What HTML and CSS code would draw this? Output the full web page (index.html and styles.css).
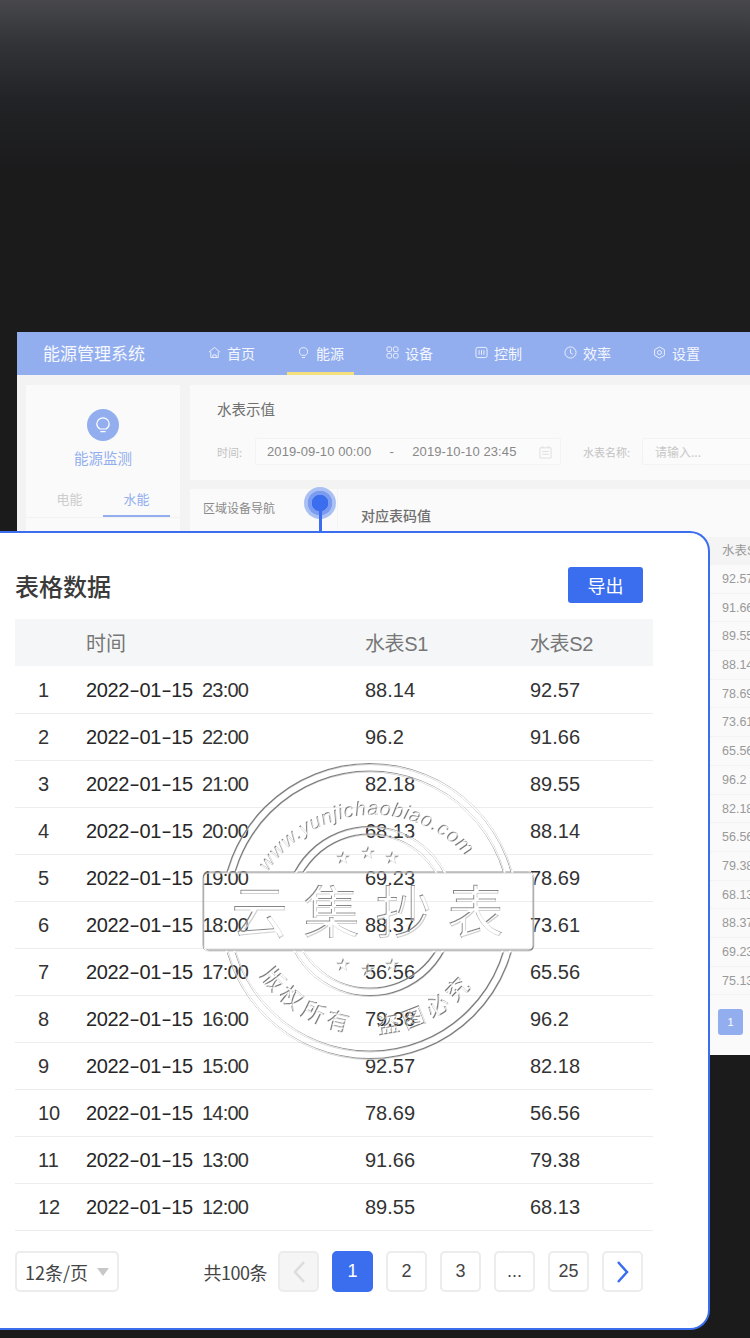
FILE: index.html
```html
<!DOCTYPE html>
<html lang="zh">
<head>
<meta charset="utf-8">
<title>能源管理系统</title>
<link rel="stylesheet" href="styles.css">
</head>
<body>
<div class="stage">
  <section class="dash">
    <header class="topbar">
      <div class="logo">能源管理系统</div>
      <nav class="nav">
        <a class="nav-item"><svg class="nav-ico" viewBox="0 0 14 14"><path d="M1 6.600 7 1.600l6 5M3 6v6.400h8V6M5.200 12.200V9.600h3.600v2.600"/></svg>首页</a>
        <a class="nav-item active"><svg class="nav-ico" viewBox="0 0 14 14"><path d="M4.800 10C3.400 9 2.600 7.800 2.600 6.200a4.400 4.400 0 0 1 8.800 0c0 1.600-.8 2.800-2.200 3.800zM5.200 12.400h3.600"/></svg>能源</a>
        <a class="nav-item"><svg class="nav-ico" viewBox="0 0 14 14"><rect x="1" y="1" width="5" height="5" rx="1.500"/><rect x="8" y="1" width="5" height="5" rx="1.500"/><rect x="1" y="8" width="5" height="5" rx="1.500"/><rect x="8" y="8" width="5" height="5" rx="1.500"/></svg>设备</a>
        <a class="nav-item"><svg class="nav-ico" viewBox="0 0 14 14"><rect x="1" y="1.500" width="12" height="11" rx="2"/><path d="M4.400 4.500v5M7 4.500v5M9.600 4.500v5"/></svg>控制</a>
        <a class="nav-item"><svg class="nav-ico" viewBox="0 0 14 14"><circle cx="7" cy="7" r="6"/><path d="M7 3.500V7.500l2.400 1.200"/></svg>效率</a>
        <a class="nav-item"><svg class="nav-ico" viewBox="0 0 14 14"><path d="M7 .9 12.300 4v6L7 13.100 1.700 10V4z"/><circle cx="7" cy="7" r="2.200"/></svg>设置</a>
      </nav>
    </header>
    <div class="body">
      <aside class="side">
        <div class="side-head">
          <span class="side-badge"><svg viewBox="0 0 20 20"><path d="M6.800 14C4.900 12.700 3.800 11 3.800 9a6.200 6.200 0 0 1 12.400 0c0 2-1.100 3.700-3 5zM7.400 16.600h5.200"/></svg></span>
          <div class="side-title">能源监测</div>
        </div>
        <div class="tabs"><span class="tab">电能</span><span class="tab on">水能</span></div>
      </aside>
      <div class="main">
        <section class="filter">
          <h2 class="panel-title">水表示值</h2>
          <div class="filter-row">
            <span class="lbl">时间:</span>
            <div class="range"><span>2019-09-10 00:00</span><span class="dash-sep">-</span><span>2019-10-10 23:45</span>
              <svg class="cal" viewBox="0 0 14 14"><path d="M1 2.500h12v11H1zM4 .5v2M10 .5v2M3.500 6.500h7M3.500 9.500h7"/></svg></div>
            <span class="lbl lbl-name">水表名称:</span>
            <div class="inp">请输入...</div>
          </div>
        </section>
        <div class="lower">
          <section class="tree"><h3 class="tree-title">区域设备导航</h3></section>
          <section class="values">
            <h2 class="values-title">对应表码值</h2>
            <div class="mini">
              <div class="mini-row mini-head">水表S2</div>
              <div class="mini-row">92.57</div><div class="mini-row">91.66</div><div class="mini-row">89.55</div>
              <div class="mini-row">88.14</div><div class="mini-row">78.69</div><div class="mini-row">73.61</div>
              <div class="mini-row">65.56</div><div class="mini-row">96.2</div><div class="mini-row">82.18</div>
              <div class="mini-row">56.56</div><div class="mini-row">79.38</div><div class="mini-row">68.13</div>
              <div class="mini-row">88.37</div><div class="mini-row">69.23</div><div class="mini-row">75.13</div>
            </div>
            <div class="mini-pager"><span class="mini-page">1</span></div>
          </section>
        </div>
      </div>
    </div>
  </section>

  <div class="marker"><span class="halo"></span><span class="stem"></span></div>

  <section class="card">
    <div class="card-head">
      <h1 class="card-title">表格数据</h1>
      <button class="export">导出</button>
    </div>
    <div class="tbl">
      <div class="row head"><span></span><span>时间</span><span>水表S1</span><span>水表S2</span></div>
      <div class="row"><span>1</span><span><i class="d">2022<b>-</b>01<b>-</b>15</i>23:00</span><span>88.14</span><span>92.57</span></div>
      <div class="row"><span>2</span><span><i class="d">2022<b>-</b>01<b>-</b>15</i>22:00</span><span>96.2</span><span>91.66</span></div>
      <div class="row"><span>3</span><span><i class="d">2022<b>-</b>01<b>-</b>15</i>21:00</span><span>82.18</span><span>89.55</span></div>
      <div class="row"><span>4</span><span><i class="d">2022<b>-</b>01<b>-</b>15</i>20:00</span><span>68.13</span><span>88.14</span></div>
      <div class="row"><span>5</span><span><i class="d">2022<b>-</b>01<b>-</b>15</i>19:00</span><span>69.23</span><span>78.69</span></div>
      <div class="row"><span>6</span><span><i class="d">2022<b>-</b>01<b>-</b>15</i>18:00</span><span>88.37</span><span>73.61</span></div>
      <div class="row"><span>7</span><span><i class="d">2022<b>-</b>01<b>-</b>15</i>17:00</span><span>56.56</span><span>65.56</span></div>
      <div class="row"><span>8</span><span><i class="d">2022<b>-</b>01<b>-</b>15</i>16:00</span><span>79.38</span><span>96.2</span></div>
      <div class="row"><span>9</span><span><i class="d">2022<b>-</b>01<b>-</b>15</i>15:00</span><span>92.57</span><span>82.18</span></div>
      <div class="row"><span>10</span><span><i class="d">2022<b>-</b>01<b>-</b>15</i>14:00</span><span>78.69</span><span>56.56</span></div>
      <div class="row"><span>11</span><span><i class="d">2022<b>-</b>01<b>-</b>15</i>13:00</span><span>91.66</span><span>79.38</span></div>
      <div class="row"><span>12</span><span><i class="d">2022<b>-</b>01<b>-</b>15</i>12:00</span><span>89.55</span><span>68.13</span></div>
    </div>
    <div class="pager">
      <div class="size">12条/页<span class="caret"></span></div>
      <div class="pages">
        <span class="total">共100条</span>
        <span class="pg disabled"><svg class="chev" viewBox="0 0 14 24"><path d="M12 2 3 12l9 10"/></svg></span>
        <span class="pg cur">1</span>
        <span class="pg">2</span>
        <span class="pg">3</span>
        <span class="pg">...</span>
        <span class="pg">25</span>
        <span class="pg next"><svg class="chev" viewBox="0 0 14 24"><path d="M2 2l9 10-9 10"/></svg></span>
      </div>
    </div>
  </section>

  <svg class="stamp" viewBox="200 750 350 320" aria-label="云集抄表 watermark">
    <defs>
      <filter id="emboss" x="-5%" y="-5%" width="110%" height="110%">
        <feOffset in="SourceAlpha" dx="0.7" dy="0.7" result="o1"/>
        <feComposite in="SourceAlpha" in2="o1" operator="out" result="edgeA"/>
        <feFlood flood-color="#555" flood-opacity=".8"/>
        <feComposite in2="edgeA" operator="in" result="dark"/>
        <feOffset in="SourceAlpha" dx="-0.7" dy="-0.7" result="o2"/>
        <feComposite in="SourceAlpha" in2="o2" operator="out" result="edgeB"/>
        <feFlood flood-color="#c8c8c8" flood-opacity=".85"/>
        <feComposite in2="edgeB" operator="in" result="lite"/>
        <feFlood flood-color="#ffffff" flood-opacity=".45"/>
        <feComposite in2="SourceAlpha" operator="in" result="fill"/>
        <feMerge><feMergeNode in="fill"/><feMergeNode in="lite"/><feMergeNode in="dark"/></feMerge>
      </filter>
      <clipPath id="outside">
        <rect x="200" y="750" width="350" height="122"/>
        <rect x="200" y="951" width="350" height="119"/>
      </clipPath>
      <path id="arc-top" d="M268 872A125 125 0 0 1 478 872"/>
      <path id="arc-bot" d="M260 975A132 132 0 0 0 480 975"/>
      <polygon id="star" points="0,-7 1.800,-2.200 6.800,-2.200 2.800,.9 4.300,5.800 0,2.900 -4.300,5.800 -2.800,.9 -6.800,-2.200 -1.800,-2.200"/>
    </defs>
    <g filter="url(#emboss)">
      <g clip-path="url(#outside)" class="rings">
        <circle cx="369.500" cy="911.500" r="147.500"/>
        <circle cx="369.500" cy="911.500" r="140"/>
        <circle cx="369.500" cy="911.500" r="84.500"/>
        <circle cx="369.500" cy="911.500" r="77"/>
      </g>
      <rect class="plate" x="203.500" y="872.500" width="330" height="78" rx="5"/>
      <text class="st-url"><textPath href="#arc-top">www.yunjichaobiao.com</textPath></text>
      <text class="st-big" x="231" y="933">云集抄表</text>
      <text class="st-foot"><textPath href="#arc-bot">版权所有 盗图必究</textPath></text>
      <use href="#star" x="343" y="858"/><use href="#star" x="368" y="853"/><use href="#star" x="392" y="858"/>
      <use href="#star" x="343" y="965"/><use href="#star" x="368" y="970"/><use href="#star" x="392" y="965"/>
    </g>
  </svg>
</div>
</body>
</html>
```

FILE: styles.css
```css
* { box-sizing: border-box; }
html, body { margin: 0; padding: 0; }
body {
  width: 750px;
  height: 1338px;
  overflow: hidden;
  font-family: "Noto Sans CJK SC", "Liberation Sans", sans-serif;
  background: #1b1b1c;
}
.stage {
  position: relative;
  width: 750px;
  height: 1338px;
  padding: 332px 0 0 17px;
  overflow: hidden;
  background: linear-gradient(#48484c 0, #323336 45px, #222326 100px, #1b1b1c 170px) no-repeat;
}

/* dimmed dashboard */
.dash { width: 733px; height: 723px; overflow: hidden; background: #f3f3f3; }
.topbar { display: flex; height: 43px; background: #92aeef; color: #fff; }
.logo { padding: 0 53px 0 26px; font-size: 17px; line-height: 41px; white-space: nowrap; color: #f6f8fe; }
.nav { display: flex; gap: 22px; }
.nav-item {
  display: flex; align-items: center; justify-content: center; gap: 6px;
  width: 67px; height: 43px; font-size: 14px; color: #f4f6fd;
  border-bottom: 3px solid transparent; padding-top: 1px;
}
.nav-item.active { border-bottom-color: #f6e07e; }
.nav-ico { width: 13px; height: 13px; fill: none; stroke: #eef2fd; stroke-width: 1; }

.body { display: grid; grid-template-columns: 154px 560px; gap: 10px; padding: 10px 0 0 9px; }
.side { height: 668px; background: #fafafa; }
.side-head { display: flex; flex-direction: column; align-items: center; padding-top: 24px; }
.side-badge { display: flex; width: 32px; height: 32px; align-items: center; justify-content: center; border-radius: 50%; background: #92aeef; }
.side-badge svg { width: 20px; height: 20px; fill: none; stroke: #fff; stroke-width: 1.200; }
.side-title { margin-top: 7px; font-size: 14.500px; line-height: 20px; color: #92aeef; }
.tabs { display: grid; grid-template-columns: 67px 67px; margin-top: 19px; padding-left: 10px; border-bottom: 1px solid #f2f2f2; }
.tab { height: 30px; font-size: 13px; line-height: 24px; text-align: center; color: #cdcdcd; }
.tab.on { color: #92aeef; border-bottom: 2px solid #92aeef; }

.filter { height: 95px; padding: 13px 27px 0; background: #fafafa; }
.panel-title { margin: 0; font-size: 14.500px; font-weight: 400; line-height: 22px; color: #6f6f6f; }
.filter-row { display: flex; align-items: center; margin-top: 18px; white-space: nowrap; }
.filter-row > * { flex: none; }
.lbl { font-size: 11px; color: #c2c2c2; width: 38px; }
.lbl-name { width: 59px; margin-left: 22px; }
.range, .inp { display: flex; align-items: center; height: 27px; border: 1px solid #f3f3f3; background: #fbfbfb; border-radius: 2px; }
.range { position: relative; width: 306px; padding: 0 8px 0 11px; font: 13px/1 "Liberation Sans", sans-serif; letter-spacing: .1px; color: #888; }
.dash-sep { width: 41px; text-align: center; }
.cal { position: absolute; right: 8px; top: 6px; width: 13px; height: 14px; fill: none; stroke: #dedede; }
.inp { width: 120px; padding-left: 12px; font-size: 12px; color: #c8c8c8; }

.lower { display: grid; grid-template-columns: 147px 413px; margin-top: 9px; }
.tree { height: 566px; padding: 10px 13px; background: #fafafa; }
.tree-title { margin: 0; padding-bottom: 10px; font-size: 12px; font-weight: 400; line-height: 18px; color: #8a8a8a; }
.values { height: 566px; padding: 16px 0 0; background: #fafafa; border-left: 1px solid #f4f4f4; }
.values-title { margin: 0 0 11px 23px; font-size: 14px; font-weight: 500; line-height: 21px; color: #6f6f6f; }
.mini-row { height: 28.700px; padding-left: 384px; font: 12.500px/28px "Liberation Sans", "Noto Sans CJK SC", sans-serif; color: #999; border-bottom: 1px solid #f3f3f3; white-space: nowrap; }
.mini-head { height: 28px; background: #f4f4f4; line-height: 29px; }
.mini-pager { padding: 14px 0 0 380px; }
.mini-page { display: block; width: 25px; height: 26px; border-radius: 3px; background: #92aeef; color: #fff; font: 11px/26px "Liberation Sans", sans-serif; text-align: center; }

/* marker */
.marker { position: absolute; left: 304px; top: 487px; width: 32px; height: 45px; }
.halo { position: absolute; left: 0; top: 0; width: 32px; height: 32px; border-radius: 50%; background: radial-gradient(circle, #3a6eee 0 8px, #7a9bf0 8.500px 12px, #a9c0f4 12.500px 16px); }
.stem { position: absolute; left: 15px; top: 20px; width: 3px; height: 25px; background: #3a6eee; }

/* floating card */
.card {
  position: absolute; left: 0; top: 531px; width: 710px; height: 799px;
  padding: 34px 0 0 15px;
  background: #fff;
  border: 2px solid #3a6eee; border-left: 0;
  border-radius: 0 20px 20px 0;
}
.card-head { display: flex; align-items: center; justify-content: space-between; width: 628px; height: 36px; }
.card-title { margin: 0; font-size: 24px; font-weight: 500; color: #3a3a3a; }
.export { width: 75px; height: 36px; padding: 0; border: 0; border-radius: 3px; background: #3a6eee; color: #fff; font: 18px "Noto Sans CJK SC", sans-serif; }
.tbl { width: 638px; margin-top: 16px; }
.row {
  display: grid; grid-template-columns: 71px 279px 165px 123px;
  height: 47px; align-items: center;
  font: 20px "Liberation Sans", "Noto Sans CJK SC", sans-serif; color: #333;
  border-bottom: 1px solid #ededed;
}
.row > span:first-child { padding-left: 23px; }
.row > span:nth-child(2) { letter-spacing: -.8px; }
.row.head { height: 48px; padding-bottom: 1px; background: linear-gradient(#f5f6f8 47px, #fff 47px); color: #777; border-bottom: 0; letter-spacing: -.4px; }
.row.head > span:nth-child(2) { letter-spacing: 0; }
.d { display: inline-block; width: 116px; font-style: normal; letter-spacing: -.4px; color: #262626; }
.d b { display: inline-block; width: 10.500px; font-weight: 400; text-align: center; transform: scaleX(1.600); }

.pager { display: flex; justify-content: space-between; width: 628px; margin-top: 20px; }
.size { display: flex; align-items: center; width: 104px; height: 41px; padding-left: 8px; border: 2px solid #ececec; border-radius: 5px; font-size: 18px; color: #444; gap: 9px; }
.caret { width: 0; height: 0; border: 6px solid transparent; border-top: 8px solid #c8c8c8; border-bottom: 0; }
.pages { display: flex; align-items: center; gap: 13px; }
.total { margin-right: -2px; font-size: 18px; letter-spacing: -.5px; color: #444; }
.pg { display: flex; align-items: center; justify-content: center; width: 41px; height: 41px; border: 2px solid #ececec; border-radius: 5px; font: 18px "Liberation Sans", sans-serif; color: #444; background: #fff; }
.pg.cur { background: #3a6eee; border-color: #3a6eee; color: #fff; }
.pg.disabled { background: #f5f5f5; }
.chev { width: 14px; height: 24px; fill: none; stroke: #3a6eee; stroke-width: 2.500; }
.disabled .chev { stroke: #dcdcdc; }

/* watermark */
.stamp { position: absolute; left: 200px; top: 750px; width: 350px; height: 320px; pointer-events: none; }
.rings circle, .plate { fill: none; stroke: #000; stroke-width: 1.800; }
.st-url { font: italic 20px "Liberation Sans", sans-serif; letter-spacing: .8px; }
.st-big { font: 400 57px "Noto Sans CJK SC", sans-serif; letter-spacing: 15px; }
.st-foot { font: 23px "Noto Sans CJK SC", sans-serif; letter-spacing: 5px; word-spacing: 16px; }
```
